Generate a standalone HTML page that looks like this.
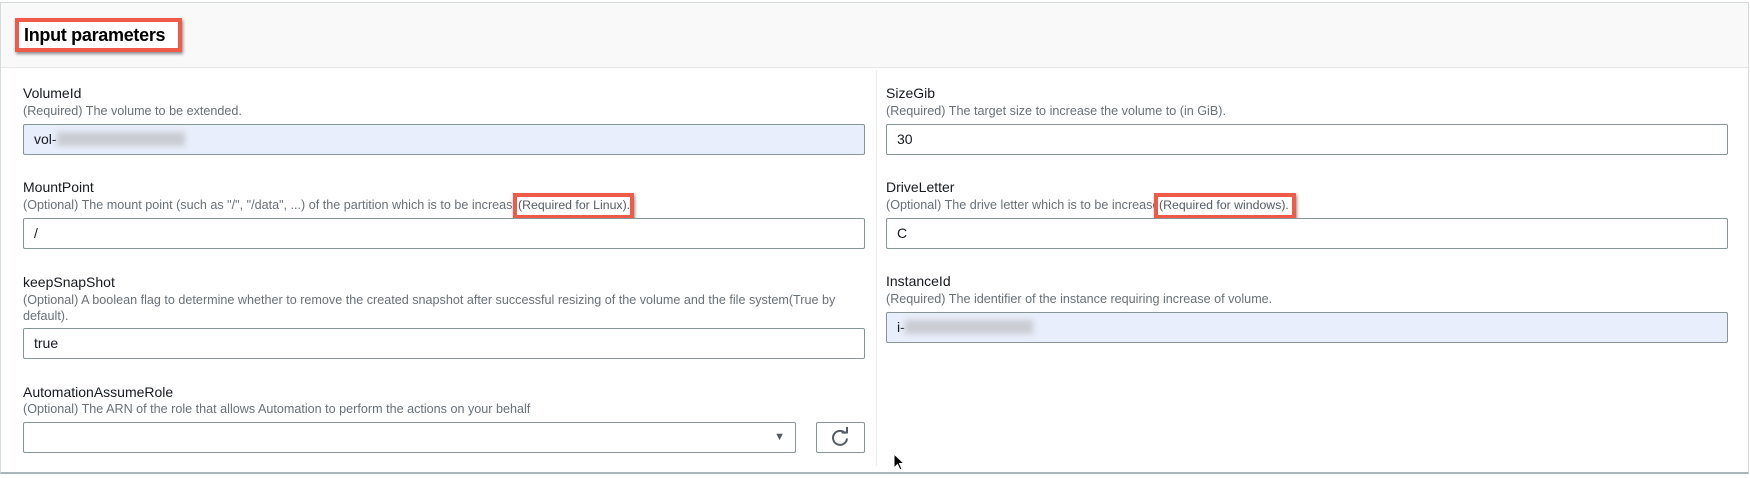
<!DOCTYPE html>
<html><head><meta charset="utf-8">
<style>
*{box-sizing:border-box;margin:0;padding:0}
body{width:1750px;height:478px;background:#fff;font-family:"Liberation Sans",sans-serif;position:relative;overflow:hidden;color:#16191f}
.panel{position:absolute;left:0;top:2px;width:1749px;height:472px;border:1px solid #d5dbdb;border-bottom:2px solid #aab7b8;background:#fff}
.hdr{position:absolute;left:0;top:0;width:100%;height:65px;background:#f9f9f9;border-bottom:1px solid #e7e7e7}
.title{position:absolute;left:14px;top:15px;width:167px;height:34px;border:4px solid #f05a48;background:#fff;box-shadow:1px 2px 3px rgba(0,0,0,.45);font-weight:bold;font-size:18px;line-height:26px;padding-left:5px;color:#000;letter-spacing:-0.3px}
.div{position:absolute;left:875px;top:67px;width:1px;height:396px;background:#eaeded}
.lab{position:absolute;font-size:14px;color:#16191f;line-height:16px}
.desc{position:absolute;font-size:12.6px;color:#687078;line-height:17px;white-space:nowrap}
.inp{position:absolute;height:31px;border:1px solid #879596;border-radius:2px;background:#fff;font-size:14px;padding-left:10px;line-height:29px}
.fill{background:#e8eefb}
.blur{display:inline-block;vertical-align:middle;height:14px;background:#c9ccd2;filter:blur(3px);margin-top:-3px}
.red{position:absolute;height:26px;border:4px solid #f05a48;background:#fff;box-shadow:1px 2px 3px rgba(0,0,0,.45);font-size:12.3px;color:#545b64;line-height:17px;padding-left:1px;white-space:nowrap;overflow:hidden}
</style></head><body>
<div class="panel">
<div class="hdr"></div>
<div class="title">Input parameters</div>
<div class="div"></div>
</div>

<div class="lab" style="left:23px;top:85px">VolumeId</div>
<div class="desc" style="left:23px;top:103px">(Required) The volume to be extended.</div>
<div class="inp fill" style="left:23px;top:124px;width:842px">vol-<span class="blur" style="width:128px"></span></div>

<div class="lab" style="left:23px;top:179px">MountPoint</div>
<div class="desc" style="left:23px;top:197px">(Optional) The mount point (such as "/", "/data", ...) of the partition which is to be increased</div>
<div class="red" style="left:513px;top:193px;width:121px">(Required for Linux).</div>
<div class="inp" style="left:23px;top:218px;width:842px">/</div>

<div class="lab" style="left:23px;top:274px">keepSnapShot</div>
<div class="desc" style="left:23px;top:292px">(Optional) A boolean flag to determine whether to remove the created snapshot after successful resizing of the volume and the file system(True by</div>
<div class="desc" style="left:23px;top:308px">default).</div>
<div class="inp" style="left:23px;top:328px;width:842px">true</div>

<div class="lab" style="left:23px;top:384px">AutomationAssumeRole</div>
<div class="desc" style="left:23px;top:401px">(Optional) The ARN of the role that allows Automation to perform the actions on your behalf</div>
<div class="inp" style="left:23px;top:422px;width:773px"><span style="position:absolute;right:10px;top:0;font-size:11px;color:#545b64">&#9660;</span></div>
<div class="inp" style="left:816px;top:422px;width:49px;padding:0">
<svg width="47" height="29" viewBox="0 0 47 29" style="position:absolute;left:0;top:0"><path d="M28.5 10.5 A7 7 0 1 0 30 15.5" fill="none" stroke="#545b64" stroke-width="2"/><path d="M24.5 9.5 L30 9.5 L30 4" fill="none" stroke="#545b64" stroke-width="2"/></svg>
</div>

<div class="lab" style="left:886px;top:85px">SizeGib</div>
<div class="desc" style="left:886px;top:103px">(Required) The target size to increase the volume to (in GiB).</div>
<div class="inp" style="left:886px;top:124px;width:842px">30</div>

<div class="lab" style="left:886px;top:179px">DriveLetter</div>
<div class="desc" style="left:886px;top:197px">(Optional) The drive letter which is to be increased</div>
<div class="red" style="left:1154px;top:193px;width:142px">(Required for windows).</div>
<div class="inp" style="left:886px;top:218px;width:842px">C</div>

<div class="lab" style="left:886px;top:273px">InstanceId</div>
<div class="desc" style="left:886px;top:291px">(Required) The identifier of the instance requiring increase of volume.</div>
<div class="inp fill" style="left:886px;top:312px;width:842px">i-<span class="blur" style="width:128px"></span></div>

<svg width="14" height="20" viewBox="0 0 14 20" style="position:absolute;left:893px;top:453px"><path d="M1 1 L1 15 L4.5 11.5 L7 17 L9 16 L6.5 10.5 L11 10.5 Z" fill="#000" stroke="#fff" stroke-width="1"/></svg>
</body></html>
